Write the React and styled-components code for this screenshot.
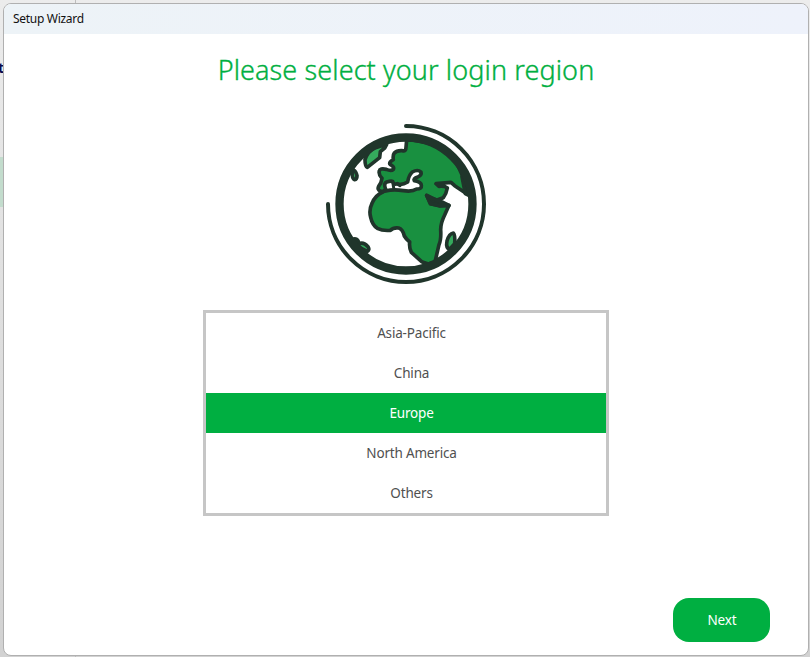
import React, { useState } from "react";
import styled, { createGlobalStyle } from "styled-components";

const GlobalStyle = createGlobalStyle`
  * { box-sizing: border-box; }
  body { margin: 0; overflow: hidden; font-family: "Noto Sans", "Open Sans", sans-serif; }
`;

const Desktop = styled.div`
  position: relative;
  width: 810px;
  height: 657px;
  padding: 3px 1px 1px 3px;
  background: linear-gradient(#ececec, #e2e2e2 35%, #d2d2d2);
  overflow: hidden;
`;

const GuideLine = styled.div`
  position: absolute;
  left: 75px;
  top: 0;
  width: 1px;
  height: 100%;
  background: #bdbdbd;
`;

const BackdropSelection = styled.div`
  position: absolute;
  left: 0;
  top: 157px;
  width: 4px;
  height: 50px;
  background: #c3dccd;
`;

const BackdropText = styled.span`
  position: absolute;
  right: 806px;
  top: 59px;
  font-size: 14px;
  line-height: 18px;
  font-weight: 700;
  color: #0a0a50;
`;

const Window = styled.main`
  position: relative;
  display: flex;
  flex-direction: column;
  height: 653px;
  border: 1px solid #b0b0b0;
  border-radius: 8px;
  background: #fff;
  overflow: hidden;
`;

const TitleBar = styled.header`
  flex: none;
  height: 30px;
  padding-left: 9px;
  font-size: 12px;
  line-height: 30px;
  letter-spacing: -0.3px;
  color: #111;
  background: linear-gradient(90deg, #edf3f7, #eef2fb);
`;

const Content = styled.section`
  flex: 1;
  display: flex;
  flex-direction: column;
  align-items: center;
`;

const Heading = styled.h1`
  margin: 16px 0 0;
  height: 40px;
  font-size: 27px;
  line-height: 40px;
  font-weight: 300;
  letter-spacing: 0.1px;
  -webkit-text-stroke: 0.35px #00af41;
  white-space: nowrap;
  color: #00af41;
`;

const Globe = styled.svg`
  display: block;
  width: 160px;
  height: 160px;
  margin-top: 34px;
`;

const RegionList = styled.div`
  width: 406px;
  height: 206px;
  margin-top: 26px;
  border: 3px solid #c6c6c6;
`;

const Region = styled.button`
  display: block;
  width: 100%;
  height: 40px;
  padding: 0 0 0 11px;
  border: 0;
  font: 400 13.5px/40px "Noto Sans", "Open Sans", sans-serif;
  letter-spacing: -0.18px;
  text-align: center;
  color: ${(p) => (p.$selected ? "#fff" : "#505050")};
  background: ${(p) => (p.$selected ? "#00af41" : "#fff")};
`;

const Footer = styled.footer`
  display: flex;
  justify-content: flex-end;
  width: 100%;
  margin-top: auto;
  padding: 0 38px 13px 0;
`;

const NextButton = styled.button`
  width: 97px;
  height: 44px;
  padding: 0 0 0 1px;
  border: 0;
  border-radius: 16px;
  font: 400 13.5px/44px "Noto Sans", "Open Sans", sans-serif;
  letter-spacing: -0.1px;
  color: #fff;
  background: #00af41;
`;

const regions = ["Asia-Pacific", "China", "Europe", "North America", "Others"];

function GlobeIcon() {
  return (
    <Globe viewBox="-42 -33 480 480" fill="none" stroke="#20352b" strokeWidth="11" strokeLinejoin="round" strokeLinecap="round">
      <path fill="#199040" d="M200 15L198 37Q198 50 187 47Q170 46 163 54Q158 60 160 74Q146 82 150 88Q164 95 160 103Q154 109 139 103Q119 99 118 108Q115 119 126 130Q124 145 116 154Q111 164 121 168L128 171Q106 181 96 205Q86 225 92 247Q97 270 112 280Q128 288 151 286Q160 277 176 279Q188 282 193 303Q198 312 209 321Q207 339 214 352L245 380L265 387L285 381L297 329Q304 314 302 284Q302 264 314 240L327 211L300 213L272 206L260 181Q275 193 291 195L310 188Q319 176 322 159Q313 152 297 154L288 146L333 142L344 152L380 176Q376 125 340 70Q285 16 200 15Z" />
      <path fill="#fff" d="M128 170L137 163Q130 145 140 141Q153 137 158 139Q161 151 172 146Q185 152 203 141Q206 121 217 111Q233 102 243 111Q246 121 231 127Q219 131 223 137Q244 141 244 151Q246 162 230 162Q217 171 190 167Q160 162 137 168Z" />
      <path strokeWidth="9" d="M158 140L161 158M172 147L180 152" />
      <path fill="#20352b" d="M260 181L271 206L300 212L327 211L306 201L292 196Z" />
      <path fill="#35aa5d" d="M75 74Q83 50 104 39L140 28L134 39L121 50L119 68L82 97Q75 94 75 74Z" />
      <path fill="#35aa5d" d="M41 105Q48 109 51 122Q51 133 44 134Q35 131 37 111" />
      <path fill="#35aa5d" d="M340 294Q346 300 344 326L329 343Q317 339 321 318Q327 296 340 294Z" />
      <path fill="#35aa5d" d="M35 314Q54 306 57 327Q69 319 84 335Q90 345 82 349L64 340Z" />
      <path fill="#20352b" d="M366 125L376 176L388 182L388 150Z" />
      <circle cx="198" cy="207" r="199.5" strokeWidth="25" />
      <path strokeWidth="12" d="M198 -27A234 234 0 1 1 -36 207" />
    </Globe>
  );
}

export default function App() {
  const [selected, setSelected] = useState("Europe");
  return (
    <Desktop>
      <GlobalStyle />
      <GuideLine />
      <BackdropSelection />
      <BackdropText>t</BackdropText>
      <Window>
        <TitleBar>Setup Wizard</TitleBar>
        <Content>
          <Heading>Please select your login region</Heading>
          <GlobeIcon />
          <RegionList>
            {regions.map((name) => (
              <Region key={name} $selected={name === selected} onClick={() => setSelected(name)}>
                {name}
              </Region>
            ))}
          </RegionList>
          <Footer>
            <NextButton>Next</NextButton>
          </Footer>
        </Content>
      </Window>
    </Desktop>
  );
}
